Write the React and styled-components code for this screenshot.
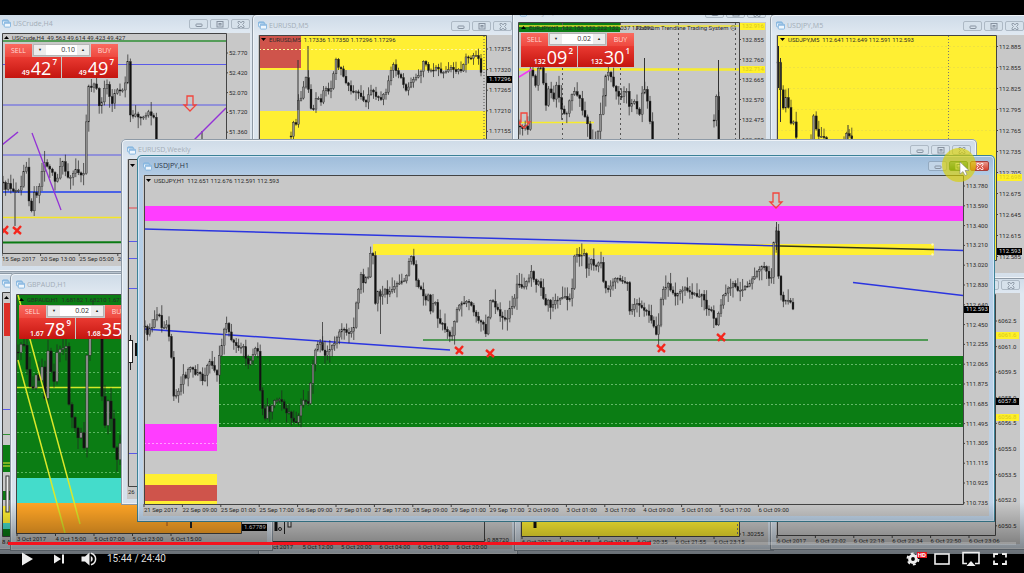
import styled, { createGlobalStyle, css } from 'styled-components';
import { useState } from 'react';

const LETTERBOX_TOP = 15;
const UP = '#8f8f8f';

const H1_PRICES = [
  '113.780', '113.590', '113.400', '113.210', '113.020', '112.830',
  '112.640', '112.450', '112.255', '112.065', '111.875', '111.685',
  '111.495', '111.305', '111.115', '110.925', '110.735',
];

const H1_TIMES = [
  '21 Sep 2017', '22 Sep 09:00', '25 Sep 01:00', '25 Sep 17:00',
  '26 Sep 09:00', '27 Sep 01:00', '27 Sep 17:00', '28 Sep 09:00',
  '29 Sep 01:00', '29 Sep 17:00', '2 Oct 09:00', '3 Oct 01:00',
  '3 Oct 17:00', '4 Oct 09:00', '5 Oct 01:00', '5 Oct 17:00', '6 Oct 09:00',
];

// [x, y] turning points, the candles are filled in between them
const H1_PATH = [
  [145, 326], [146, 342], [149, 328], [152, 327], [156, 314], [159, 314],
  [161, 325], [163, 329], [166, 324], [168, 326], [170, 345], [172, 363],
  [173, 378], [174, 400], [177, 393], [180, 390], [182, 377], [184, 372],
  [186, 379], [188, 370], [192, 368], [195, 375], [198, 371], [203, 381],
  [206, 371], [209, 361], [213, 365], [217, 376], [219, 356], [222, 344],
  [225, 325], [227, 322], [229, 333], [233, 343], [238, 347], [244, 347],
  [246, 359], [249, 366], [253, 354], [256, 348], [258, 351], [260, 388],
  [263, 412], [265, 418], [267, 404], [270, 413], [274, 402], [279, 400],
  [283, 401], [285, 414], [289, 411], [292, 421], [297, 421], [300, 412],
  [302, 397], [306, 403], [309, 402], [311, 380], [314, 356], [317, 345],
  [321, 342], [324, 356], [328, 350], [333, 346], [338, 336], [341, 328],
  [345, 331], [350, 334], [354, 326], [356, 305], [359, 288], [361, 275],
  [363, 283], [366, 278], [369, 275], [371, 247], [373, 257], [375, 305],
  [378, 292], [381, 298], [384, 289], [388, 294], [392, 288], [397, 284],
  [402, 280], [406, 282], [408, 264], [411, 257], [414, 264], [417, 286],
  [421, 290], [426, 301], [429, 294], [431, 317], [434, 295], [438, 320],
  [443, 325], [448, 333], [451, 340], [454, 326], [457, 310], [461, 304],
  [465, 302], [470, 303], [474, 313], [478, 320], [482, 324], [485, 326],
  [487, 343], [489, 302], [493, 302], [497, 308], [501, 317], [507, 319],
  [510, 307], [514, 304], [516, 284], [518, 282], [523, 287], [528, 281],
  [532, 269], [535, 289], [538, 281], [542, 290], [545, 306], [549, 300],
  [551, 311], [554, 300], [560, 300], [564, 294], [569, 301], [572, 290],
  [575, 252], [579, 256], [584, 252], [587, 272], [590, 259], [596, 267],
  [601, 261], [604, 286], [607, 292], [612, 283], [616, 279], [622, 281],
  [628, 284], [630, 315], [634, 304], [638, 303], [643, 309], [648, 313],
  [652, 320], [656, 334], [659, 322], [661, 300], [664, 287], [668, 284],
  [673, 293], [677, 296], [681, 291], [686, 288], [691, 293], [696, 295],
  [703, 296], [707, 309], [712, 311], [716, 327], [719, 312], [723, 297],
  [727, 290], [733, 284], [738, 290], [744, 288], [749, 285], [754, 276],
  [759, 270], [764, 266], [769, 278], [773, 275], [774, 236], [777, 229],
  [779, 287], [782, 301], [786, 302], [788, 299], [791, 303], [793, 309],
];

const CRUDE_PATH = [
  [3, 182], [5, 192], [8, 183], [12, 190], [16, 190], [20, 192], [24, 170],
  [27, 166], [29, 200], [31, 216], [34, 192], [38, 196], [41, 176],
  [44, 160], [48, 168], [52, 172], [56, 186], [60, 166], [63, 163],
  [67, 176], [71, 178], [76, 168], [81, 176], [84, 172], [86, 125],
  [88, 87], [92, 87], [96, 83], [98, 98], [100, 113], [104, 88], [108, 83],
  [111, 109], [114, 94], [118, 90], [122, 91], [125, 90], [126, 52],
  [128, 62], [130, 112], [131, 120], [135, 112], [139, 119], [144, 118],
  [149, 112], [154, 118], [156, 138], [158, 152],
];

const EURUSD_PATH = [
  [291, 136], [293, 123], [296, 124], [298, 100], [301, 97], [304, 84],
  [307, 76], [309, 92], [311, 108], [314, 109], [317, 92], [320, 106],
  [324, 88], [330, 91], [333, 80], [335, 56], [338, 68], [341, 70],
  [345, 80], [350, 90], [355, 92], [360, 94], [366, 103], [370, 88],
  [375, 95], [380, 100], [386, 92], [390, 73], [393, 64], [397, 72],
  [402, 80], [406, 91], [411, 82], [416, 77], [421, 72], [424, 61],
  [429, 72], [437, 67], [443, 74], [450, 67], [457, 71], [463, 69],
  [465, 56], [470, 60], [475, 54], [479, 58], [482, 79],
];

const EURJPY_PATH = [
  [520, 126], [523, 130], [526, 124], [529, 132], [530, 68], [533, 75],
  [536, 88], [539, 60], [543, 76], [545, 110], [549, 87], [554, 99],
  [557, 82], [560, 104], [566, 118], [570, 99], [575, 91], [579, 97],
  [583, 112], [587, 120], [590, 142], [597, 140], [601, 110], [604, 90],
  [607, 68], [611, 78], [616, 92], [620, 98], [626, 88], [629, 106],
  [634, 101], [640, 116], [643, 84], [646, 92], [649, 112], [653, 150],
];

const USDJPY_PATHS = [
  [[778, 62], [780, 80], [782, 115], [785, 97], [788, 96], [789, 122], [795, 123], [797, 145]],
  [[811, 140], [812, 115], [815, 118], [817, 136], [823, 135], [827, 142]],
  [[844, 142], [846, 134], [850, 136], [854, 140]],
];

const GBPAUD_PATH = [
  [18, 352], [21, 345], [25, 345], [28, 380], [32, 391], [37, 372],
  [40, 383], [43, 358], [45, 398], [48, 350], [51, 372], [55, 384],
  [57, 352], [62, 348], [66, 345], [68, 400], [72, 418], [74, 408],
  [76, 450], [80, 428], [84, 447], [86, 370], [89, 330], [93, 310],
  [100, 330], [102, 395], [104, 432], [108, 402], [113, 428], [115, 466],
  [118, 458], [121, 435],
];

const yAt = (path, x) => {
  const i = path.findIndex((point) => point[0] >= x);
  if (i <= 0) return path[0][1];
  const [x0, y0] = path[i - 1];
  const [x1, y1] = path[i];
  return y0 + ((y1 - y0) * (x - x0)) / (x1 - x0);
};

const makeCandles = (path, step, wick) => {
  const result = [];
  const last = path[path.length - 1][0];
  let open = path[0][1];
  let seed = 7;
  for (let x = path[0][0]; x <= last; x += step) {
    seed = (seed * 16807) % 2147483647;
    const a = (seed % 1000) / 1000;
    seed = (seed * 16807) % 2147483647;
    const b = (seed % 1000) / 1000;
    const close = yAt(path, x) + (a - 0.5) * 3;
    result.push({
      x,
      open,
      close,
      high: Math.min(open, close) - a * a * wick - 1,
      low: Math.max(open, close) + b * b * wick + 1,
    });
    open = close;
  }
  return result;
};

function Candles({ path, step = 2.4, wick = 11 }) {
  return (
    <g>
      {makeCandles(path, step, wick).map((c) => (
        <g key={c.x}>
          <line x1={c.x} x2={c.x} y1={c.high} y2={c.low} stroke='#222' strokeWidth='0.7' />
          <rect
            x={c.x - step * 0.38}
            width={step * 0.76}
            y={Math.min(c.open, c.close)}
            height={Math.max(1, Math.abs(c.close - c.open))}
            fill={c.close > c.open ? '#111' : UP}
            stroke='#222'
            strokeWidth='0.4'
          />
        </g>
      ))}
    </g>
  );
}

function Zone({ x, y, to, bottom, color }) {
  return <rect x={x} y={y} width={to - x} height={bottom - y} fill={color} />;
}

function Line({ from, to, color, width = 1, dash }) {
  return (
    <line
      x1={from[0]}
      y1={from[1]}
      x2={to[0]}
      y2={to[1]}
      stroke={color}
      strokeWidth={width}
      strokeDasharray={dash}
    />
  );
}

function Frame({ left, top, right, bottom }) {
  return (
    <path
      d={`M${left} ${bottom}V${top}H${right}V${bottom}Z`}
      fill='none'
      stroke='#444'
      strokeWidth='1'
    />
  );
}

function PriceAxis({ x, y, step, prices }) {
  return prices.map((price, i) => (
    <g key={price}>
      <path d={`M${x} ${y + i * step}h2`} stroke='#444' />
      <Label x={x + 3} y={y + i * step + 2}>
        {price}
      </Label>
    </g>
  ));
}

function TimeAxis({ x, y, step, times }) {
  return times.map((time, i) => (
    <g key={time}>
      <path d={`M${x + i * step} ${y - 8}v3`} stroke='#444' />
      <Label x={x + i * step} y={y}>
        {time}
      </Label>
    </g>
  ));
}

function PriceTag({ x, y, width = 25, color = '#000', text = '#ddd', children }) {
  return (
    <g>
      <rect x={x} y={y - 3} width={width} height='7' fill={color} />
      <Label x={x + 2} y={y + 2} $color={text}>
        {children}
      </Label>
    </g>
  );
}

function ChartTitle({ x, y, up, children }) {
  return (
    <g>
      <path d={up ? `M${x} ${y}h5l-2.5 -3z` : `M${x} ${y - 3}h5l-2.5 3z`} fill='#000' />
      <Label x={x + 8} y={y + 1}>
        {children}
      </Label>
    </g>
  );
}

function Cross({ x, y }) {
  return (
    <path
      d={`M${x - 4} ${y - 3}l8 7M${x + 4} ${y - 4}l-7 8`}
      stroke='#f5261c'
      strokeWidth='2.4'
      fill='none'
    />
  );
}

function DownArrow({ x, y }) {
  return (
    <path
      d={`M${x - 3} ${y}h6v9h3l-6 6l-6 -6h3z`}
      stroke='#f2453c'
      strokeWidth='1.3'
      fill='none'
    />
  );
}

function WindowIcon() {
  return (
    <svg width='9' height='9' viewBox='0 0 10 9' fill='#eef6fd' stroke='#7fb2de'>
      <rect x='0.5' y='0.5' width='6.5' height='5.5' rx='1' />
      <path d='M0.5 1.5h6.5' strokeWidth='1.4' />
      <rect x='2.5' y='3' width='7' height='5.5' rx='1' />
      <path d='M2.5 4h7' strokeWidth='1.4' />
    </svg>
  );
}

const GLYPHS = {
  Minimize: <rect x='2' y='4' width='6' height='2.5' rx='0.5' />,
  Maximize: (
    <>
      <rect x='2' y='1.5' width='6' height='5.5' />
      <rect x='4' y='3.5' width='2' height='1.5' />
    </>
  ),
  Close: (
    <path
      d='M2 1.5h2l1 1.5l1 -1.5h2v1.5l-1.5 1.5l1.5 1.5v1.5h-2l-1 -1.5l-1 1.5h-2v-1.5l1.5 -1.5l-1.5 -1.5z'
      strokeWidth='0.8'
    />
  ),
};

function ChartWindow({ title, x, y, width, height, bar = 21, active, overlay, children }) {
  const pad = 6;
  return (
    <WindowShell $x={x} $y={y} $width={width} $height={height} $active={active}>
      <TitleBar $height={bar}>
        <WindowIcon />
        <Title $active={active}>{title}</Title>
        {Object.keys(GLYPHS).map((name) => (
          <WindowButton key={name} aria-label={`${name} ${title}`} $kind={active && name}>
            <svg width='10' height='9' viewBox='0 0 10 9' fill='none' stroke='currentColor'>
              {GLYPHS[name]}
            </svg>
          </WindowButton>
        ))}
      </TitleBar>
      <Content>
        <Chart
          viewBox={`${x + pad} ${y + bar} ${width - pad * 2} ${height - bar - pad}`}
          preserveAspectRatio='xMinYMin slice'
        >
          {children}
        </Chart>
        {overlay}
      </Content>
    </WindowShell>
  );
}

function TradePanel({ lots, sell, buy }) {
  const [value, setValue] = useState(lots);
  const move = (delta) => setValue((prev) => (Number(prev) + delta).toFixed(2));

  return (
    <TradeBox>
      <TradeRow>
        <SideButton>SELL</SideButton>
        <Lots>
          <Step aria-label='Less' onClick={() => move(-0.01)}>▼</Step>
          <LotsInput
            aria-label='Lots'
            value={value}
            onChange={(e) => setValue(e.target.value)}
          />
          <Step aria-label='More' onClick={() => move(0.01)}>▲</Step>
        </Lots>
        <SideButton>BUY</SideButton>
      </TradeRow>
      <TradeRow>
        {[sell, buy].map(([base, big, point]) => (
          <PriceButton key={base + big}>
            <Base>{base}</Base>
            <Big>{big}</Big>
            <Point>{point}</Point>
          </PriceButton>
        ))}
      </TradeRow>
    </TradeBox>
  );
}

function CrudeWindow() {
  return (
    <ChartWindow
      title='USCrude,H4'
      x={-4}
      y={12}
      width={260}
      height={260}
      overlay={<TradePanel lots='0.10' sell={['49', '42', '7']} buy={['49', '49', '7']} />}
    >
      <Line from={[2, 105]} to={[226, 105]} color='#5a5ae8' />
      <Line from={[2, 64.5]} to={[226, 64.5]} color='#5a5ae8' />
      <Line from={[2, 155]} to={[226, 155]} color='#5a5ae8' />
      <Line from={[2, 192]} to={[226, 192]} color='#1f3ff0' width={1.5} />
      <Line from={[2, 217.5]} to={[226, 217.5]} color='#f5e626' width={1.5} />
      <Line from={[2, 242.5]} to={[226, 242]} color='#0a7a12' width={2} />
      <Line from={[2, 41]} to={[226, 41]} color='#2f8f35' width={1.5} />
      <Candles path={CRUDE_PATH} step={2.6} wick={12} />
      <Line from={[15, 190]} to={[15, 226]} color='#333' />
      <Line from={[202, 131]} to={[202, 142]} color='#333' />
      <Line from={[2, 145]} to={[18, 132]} color='#9332d6' width={1.5} />
      <Line from={[32, 133]} to={[61, 210]} color='#9332d6' width={1.3} />
      <Line from={[194, 140]} to={[226, 108]} color='#9332d6' width={1.5} />
      <Cross x={4} y={230} />
      <Cross x={17} y={230} />
      <DownArrow x={190} y={96} />
      <Frame left={2.5} top={33.5} right={226.5} bottom={253.5} />
      <ChartTitle x={4} y={39} up>
        USCrude,H4  49.563 49.614 49.423 49.427
      </ChartTitle>
      <PriceAxis
        x={226}
        y={53}
        step={19.8}
        prices={['52.770', '52.420', '52.070', '51.720', '51.360']}
      />
      <TimeAxis
        x={2}
        y={261}
        step={38.6}
        times={['15 Sep 2017', '20 Sep 13:00', '25 Sep 05:00', '27 Sep 21:00']}
      />
    </ChartWindow>
  );
}

function EurUsdWindow() {
  return (
    <ChartWindow title='EURUSD,M5' x={252} y={14} width={266} height={250}>
      <Zone x={259} y={35} to={486} bottom={70} color='#ffef33' />
      <Zone x={259} y={111} to={486} bottom={240} color='#ffef33' />
      <Zone x={259} y={35} to={301} bottom={68} color='#cf544b' />
      <Line from={[259, 49.5]} to={[486, 49.5]} color='#fff7a0' dash='2 2' />
      <Line from={[484, 36]} to={[484, 140]} color='#555' dash='1 2' />
      <Candles path={EURUSD_PATH} step={2.5} wick={8} />
      <Line from={[308, 46]} to={[308, 78]} color='#333' />
      <Line from={[298, 60]} to={[298, 110]} color='#333' />
      <Frame left={259.5} top={35.5} right={486.5} bottom={240.5} />
      <ChartTitle x={261} y={41}>
        EURUSD,M5  1.17336 1.17350 1.17296 1.17296
      </ChartTitle>
      <PriceAxis
        x={486}
        y={49}
        step={20.6}
        prices={['1.17375', '1.17320', '1.17265', '1.17210', '1.17155']}
      />
      <PriceTag x={487} y={79}>1.17296</PriceTag>
    </ChartWindow>
  );
}

function EurJpyWindow() {
  return (
    <ChartWindow
      title='EURJPY,H1'
      x={512}
      y={1}
      width={260}
      height={250}
      overlay={<TradePanel lots='0.02' sell={['132', '09', '2']} buy={['132', '30', '1']} />}
    >
      <Zone x={519} y={23} to={620} bottom={32} color='#0b7d14' />
      <Line from={[519, 26]} to={[739, 26]} color='#f2e930' width={1.5} />
      <Line from={[519, 69.5]} to={[739, 69.5]} color='#f7ec2c' width={2.4} />
      <Line from={[519, 122.5]} to={[594, 122.5]} color='#f7ec2c' width={1.6} />
      {[562.5, 620.5, 678.5, 735.5].map((x) => (
        <Line key={x} from={[x, 23]} to={[x, 145]} color='#555' dash='2 3' />
      ))}
      <Candles path={EURJPY_PATH} step={2.6} wick={13} />
      <Candles path={[[714, 120], [715, 118], [717, 88], [719, 150]]} step={2.4} />
      <Line from={[718.5, 60]} to={[718.5, 110]} color='#333' />
      <Line from={[644.5, 58]} to={[644.5, 90]} color='#333' />
      <Line from={[519, 77]} to={[532, 69]} color='#f23cf2' width={1.5} />
      <DownArrow x={524} y={113} />
      <Frame left={518.5} top={22.5} right={739.5} bottom={240.5} />
      <ChartTitle x={521} y={29} up>
        EURJPY,H1  132.180 132.222 132.037 132.092
      </ChartTitle>
      <Label x='736' y='30' textAnchor='end'>Platinum Trendline Trading System ☹</Label>
      <PriceAxis
        x={739}
        y={39.5}
        step={20}
        prices={['132.855', '132.760', '132.665', '132.570', '132.475', '132.380']}
      />
      <PriceTag x={740} y={26} color='#fff02a' text='#d8c81e'>132.916</PriceTag>
      <PriceTag x={740} y={69} color='#fff02a' text='#d8c81e'>132.714</PriceTag>
    </ChartWindow>
  );
}

function UsdJpyM5Window() {
  return (
    <ChartWindow title='USDJPY,M5' x={770} y={14} width={260} height={265}>
      <Zone x={777} y={35} to={996} bottom={261} color='#ffef33' />
      {[46.5, 67.5, 88.5, 109.5, 130.5].map((y) => (
        <Line key={y} from={[777, y]} to={[996, y]} color='#f0e240' dash='2 2' />
      ))}
      <Line from={[948.5, 36]} to={[948.5, 150]} color='#777' dash='1 2' />
      {USDJPY_PATHS.map((path) => (
        <Candles key={path[0][0]} path={path} step={2.6} />
      ))}
      <Line from={[778, 46]} to={[778, 88]} color='#222' width={2} />
      <Line from={[780.5, 58]} to={[780.5, 122]} color='#333' />
      <Line from={[848, 125]} to={[848, 140]} color='#333' />
      <Frame left={777.5} top={35.5} right={996.5} bottom={260.5} />
      <ChartTitle x={780} y={41}>
        USDJPY,M5  112.641 112.649 112.591 112.593
      </ChartTitle>
      <PriceAxis
        x={996}
        y={46.5}
        step={21}
        prices={[
          '112.885', '112.855', '112.825', '112.795', '112.765', '112.735',
          '112.705', '112.675', '112.645', '112.615', '112.585',
        ]}
      />
      <PriceTag x={997} y={177} color='#fff02a' text='#d8c81e'>112.698</PriceTag>
      <PriceTag x={997} y={251}>112.593</PriceTag>
    </ChartWindow>
  );
}

function HiddenWindow() {
  return (
    <ChartWindow title='' x={-4} y={273} width={260} height={277} bar={19}>
      <Zone x={4} y={303} to={20} bottom={336} color='#dc2f28' />
      <Line from={[2, 409.5]} to={[20, 409.5]} color='#5a5ae8' />
      <Line from={[2, 434.5]} to={[20, 434.5]} color='#2f8f35' />
      <Zone x={2} y={445} to={20} bottom={472} color='#0b7d14' />
      <Line from={[2, 463]} to={[20, 463]} color='#f2e930' />
      <Line from={[2, 466]} to={[20, 466]} color='#f2e930' />
      <Zone x={2} y={491} to={20} bottom={500} color='#0b7d14' />
      <Zone x={2} y={506} to={20} bottom={523} color='#ffef33' />
      <Zone x={2} y={523} to={20} bottom={529} color='#44dccb' />
      <Zone x={2} y={529} to={20} bottom={536} color='#0b7d14' />
      <rect x='6' y='476' width='3' height='36' fill='#eee' stroke='#333' />
      <path d='M4 299h5l-2.5 -3z' />
      <Frame left={2.5} top={292.5} right={226.5} bottom={536.5} />
      <Label x='2' y='544'>8 A</Label>
    </ChartWindow>
  );
}

function GbpAudWindow() {
  return (
    <ChartWindow
      title='GBPAUD,H1'
      x={10}
      y={273}
      width={263}
      height={278}
      overlay={<TradePanel lots='0.02' sell={['1.67', '78', '9']} buy={['1.68', '35', '5']} />}
    >
      <Zone x={17} y={294} to={241} bottom={478} color='#0b7d14' />
      <Zone x={17} y={478} to={241} bottom={503} color='#44dccb' />
      <Zone x={17} y={503} to={241} bottom={533} color='#ffa526' />
      {[352, 372, 392, 412, 432, 452, 472].map((y) => (
        <Line key={y} from={[17, y + 0.5]} to={[241, y + 0.5]} color='#5bb562' dash='2 2' />
      ))}
      <Line from={[17, 387.5]} to={[241, 387.5]} color='#d4e829' width={1.4} />
      <Candles path={GBPAUD_PATH} step={3} wick={15} />
      <Line from={[18, 295]} to={[80, 524]} color='#dbe82a' width={1.5} />
      <Line from={[18, 360]} to={[65, 533]} color='#dbe82a' width={1.5} />
      <Line from={[191, 518]} to={[191, 528]} color='#222' width={2} />
      <Line from={[167, 518]} to={[167, 526]} color='#a0521e' />
      <Frame left={16.5} top={294.5} right={241.5} bottom={533.5} />
      <ChartTitle x={19} y={301} up>
        GBPAUD,H1  1.68182 1.68210 1.67753 1.67789
      </ChartTitle>
      <PriceTag x={242} y={527}>1.67789</PriceTag>
      <TimeAxis
        x={17}
        y={541}
        step={38.5}
        times={['3 Oct 2017', '4 Oct 15:00', '5 Oct 07:00', '5 Oct 23:00', '6 Oct 15:00']}
      />
    </ChartWindow>
  );
}

function BottomRow() {
  return (
    <>
      <ChartWindow title='EURGBP,H1' x={258} y={275} width={260} height={280}>
        <path d='M276 516v15' stroke='#111' strokeWidth='3' />
        <circle cx='280' cy='529' r='1.5' fill='none' stroke='#222' />
        <path d='M284.5 522v12' stroke='#222' />
        <rect x='288' y='518' width='3' height='9' fill='#ddd' stroke='#222' />
        <Frame left={264.5} top={296.5} right={484.5} bottom={541.5} />
        <PriceAxis x={484} y={540} step={20} prices={['0.88720']} />
        <TimeAxis
          x={264}
          y={549}
          step={38.5}
          times={['5 Oct 2017', '5 Oct 12:00', '5 Oct 20:00', '6 Oct 04:00', '6 Oct 12:00', '6 Oct 20:00']}
        />
      </ChartWindow>
      <ChartWindow title='GBPUSD,M5' x={514} y={275} width={260} height={276}>
        <Zone x={521} y={296} to={740} bottom={536} color='#ffef33' />
        <Line from={[535, 520]} to={[535, 528]} color='#111' width={3} />
        <Line from={[737.5, 500]} to={[737.5, 536]} color='#777' dash='2 2' />
        <Frame left={521.5} top={296.5} right={739.5} bottom={536.5} />
        <PriceAxis x={739} y={534} step={20} prices={['1.30255']} />
        <TimeAxis
          x={522}
          y={544}
          step={38.4}
          times={['6 Oct 2017', '6 Oct 17:55', '6 Oct 19:15', '6 Oct 20:35', '6 Oct 21:55', '6 Oct 23:15']}
        />
      </ChartWindow>
      <ChartWindow title='DAX,M1' x={770} y={274} width={256} height={276} bar={19}>
        <Frame left={777.5} top={294.5} right={995.5} bottom={535.5} />
        <PriceAxis
          x={995}
          y={321}
          step={25.6}
          prices={[
            '6062.5', '6061.0', '6059.5', '6058.0', '6056.5', '6055.0',
            '6053.5', '6052.0', '6050.5',
          ]}
        />
        <PriceTag x={996} y={335} width={23} color='#fff02a' text='#d8c81e'>6061.6</PriceTag>
        <PriceTag x={996} y={417} width={23} color='#fff02a' text='#d8c81e'>6056.8</PriceTag>
        <PriceTag x={996} y={401} width={23}>6057.8</PriceTag>
        <TimeAxis
          x={777}
          y={543}
          step={38.4}
          times={['6 Oct 2017', '6 Oct 22:02', '6 Oct 22:18', '6 Oct 22:34', '6 Oct 22:50', '6 Oct 23:06']}
        />
      </ChartWindow>
    </>
  );
}

function WeeklyWindow() {
  return (
    <ChartWindow title='EURUSD,Weekly' x={121} y={139} width={856} height={366} bar={20}>
      <Line from={[129, 208]} to={[960, 208]} color='#e0484e' />
      {[241.5, 258.5, 288.5, 453.5].map((y) => (
        <Line key={y} from={[129, y]} to={[960, y]} color='#5a5ae8' />
      ))}
      <Line from={[130.5, 335]} to={[130.5, 370]} color='#222' />
      <rect x='128.5' y='340.5' width='4' height='22' fill='#fff' stroke='#222' />
      <Zone x={135} y={343} to={140} bottom={356} color='#111' />
      <path d='M130 164h5l-2.5 3z' />
      <Frame left={128.5} top={159.5} right={960.5} bottom={486.5} />
      <Label x='128' y='494'>26</Label>
    </ChartWindow>
  );
}

function UsdJpyH1Window() {
  return (
    <ChartWindow title='USDJPY,H1' x={137} y={155} width={858} height={367} bar={20} active>
      <Zone x={144} y={206} to={963} bottom={221} color='#ff3dff' />
      <Zone x={373} y={244} to={934} bottom={255} color='#ffef33' />
      <Zone x={219} y={356} to={963} bottom={427} color='#0b7d14' />
      <Zone x={144} y={424} to={217} bottom={451} color='#ff3dff' />
      <Zone x={144} y={474} to={217} bottom={504} color='#ffef33' />
      <Zone x={144} y={485} to={217} bottom={501} color='#cf544b' />
      {[364.5, 384.5, 404.5, 423.5].map((y) => (
        <Line key={y} from={[219, y]} to={[963, y]} color='#63b868' dash='2 2' />
      ))}
      <Line from={[144, 443.5]} to={[217, 443.5]} color='#ff9dff' dash='2 2' />
      <Line from={[423, 340]} to={[928, 340]} color='#2a8b31' width={1.5} />
      <Line from={[144, 229]} to={[780, 246]} color='#2b35e0' width={1.4} />
      <Line from={[780, 246]} to={[934, 249.5]} color='#33361c' width={1.3} />
      <Line from={[934, 249.5]} to={[963, 250.5]} color='#2b35e0' width={1.4} />
      <Line from={[144, 329]} to={[450, 350]} color='#2b35e0' width={1.5} />
      <Line from={[853, 282.5]} to={[963, 295.5]} color='#2b35e0' width={1.5} />
      <Candles path={H1_PATH} />
      <Line from={[380.5, 290]} to={[380.5, 334]} color='#333' width={0.8} />
      <Line from={[776.5, 222]} to={[776.5, 250]} color='#222' width={0.8} />
      <Line from={[322.5, 322]} to={[322.5, 345]} color='#333' width={0.8} />
      <circle cx='932.5' cy='244.5' r='1.2' fill='#fff9b0' />
      <circle cx='932.5' cy='254.5' r='1.2' fill='#fff9b0' />
      <Cross x={459} y={350} />
      <Cross x={490} y={353} />
      <Cross x={661} y={348} />
      <Cross x={721} y={337} />
      <DownArrow x={776} y={193} />
      <Frame left={144.5} top={175.5} right={963.5} bottom={504.5} />
      <ChartTitle x={146} y={182}>
        USDJPY,H1  112.651 112.676 112.591 112.593
      </ChartTitle>
      <PriceAxis x={963} y={186} step={19.8} prices={H1_PRICES} />
      <PriceTag x={964} y={309}>112.593</PriceTag>
      <TimeAxis x={144} y={512} step={38.4} times={H1_TIMES} />
    </ChartWindow>
  );
}

function PlayerControls() {
  const [time, setTime] = useState(944);
  const clock = `${Math.floor(time / 60)}:${String(time % 60).padStart(2, '0')}`;

  return (
    <Controls>
      <Seek
        type='range'
        aria-label='Seek'
        min='0'
        max='1480'
        value={time}
        onChange={(e) => setTime(Number(e.target.value))}
        style={{ '--played': `${(time / 1480) * 100}%` }}
      />
      <ControlRow>
        <IconButton aria-label='Play' $wide>
          <svg width='12' height='14' viewBox='0 0 12 14'>
            <path d='M1 0.5l11 6.5l-11 6.5z' />
          </svg>
        </IconButton>
        <IconButton aria-label='Next' $wide>
          <svg width='12' height='14' viewBox='0 0 12 14'>
            <path d='M2 2.5l7 4.5l-7 4.5zM10 2.5h2v9h-2z' />
          </svg>
        </IconButton>
        <IconButton aria-label='Mute' $wide>
          <svg width='16' height='14' viewBox='0 0 16 14'>
            <path d='M0.5 4.5h3.5l4.5 -4v13l-4.5 -4h-3.5z' />
            <path d='M9.8 4v6q2 -1 2 -3t-2 -3z' />
            <path
              d='M10 1.2q4.6 1.4 4.6 5.8t-4.6 5.8'
              fill='none'
              stroke='currentColor'
              strokeWidth='1.5'
            />
          </svg>
        </IconButton>
        <Time>{clock} / 24:40</Time>
        <IconButton aria-label='Settings'>
          <svg width='14' height='14' viewBox='0 0 14 14'>
            <circle cx='7' cy='7' r='3.4' fill='none' stroke='currentColor' strokeWidth='3' />
            <circle
              cx='7'
              cy='7'
              r='5.5'
              fill='none'
              stroke='currentColor'
              strokeWidth='2'
              strokeDasharray='2.8 2.96'
            />
          </svg>
          <Badge>HD</Badge>
        </IconButton>
        <IconButton aria-label='Theater mode'>
          <svg width='16' height='12' viewBox='0 0 16 12'>
            <rect x='1' y='1' width='14' height='10' fill='none' stroke='currentColor' strokeWidth='1.6' />
          </svg>
        </IconButton>
        <IconButton aria-label='AirPlay'>
          <svg width='18' height='16' viewBox='0 0 18 16'>
            <path d='M5 12.5h-4v-11h16v11h-4' fill='none' stroke='currentColor' strokeWidth='1.6' />
            <path d='M9 10l4.5 5h-9z' />
          </svg>
        </IconButton>
        <IconButton aria-label='Full screen'>
          <svg width='14' height='12' viewBox='0 0 14 12'>
            <path
              d='M1 4.5v-3.5h4M9 1h4v3.5M13 7.5v3.5h-4M5 11h-4v-3.5'
              fill='none'
              stroke='currentColor'
              strokeWidth='1.8'
            />
          </svg>
        </IconButton>
      </ControlRow>
    </Controls>
  );
}

const GlobalStyle = createGlobalStyle`
  * {
    box-sizing: border-box;
  }

  body {
    margin: 0;
    background: #000;
    font-family: 'Open Sans', 'Noto Sans', sans-serif;
  }

  button, input {
    margin: 0;
    padding: 0;
    border: 0;
    font: inherit;
  }
`;

const Player = styled.main`
  position: relative;
  display: flex;
  flex-direction: column;
  min-height: 100vh;
`;

const Desktop = styled.div`
  position: relative;
  flex: 1;
  overflow: hidden;
  margin: ${LETTERBOX_TOP}px 0 19px;
  background: #b9c4cf;
`;

const WindowShell = styled.section`
  position: absolute;
  left: ${({ $x }) => $x}px;
  top: ${({ $y }) => $y - LETTERBOX_TOP}px;
  display: flex;
  flex-direction: column;
  width: ${({ $width }) => $width}px;
  height: ${({ $height }) => $height}px;
  padding: 0 6px 6px;
  border-radius: 5px 5px 0 0;
  background: linear-gradient(#cddae7, #dfe8f1 20px, #d5e0eb);
  box-shadow: inset 0 0 0 1px #8e9aa6, inset 0 0 0 2px #eef3f8;

  ${({ $active }) =>
    $active &&
    css`
      background: linear-gradient(#9dbbd9, #b3cce5 20px, #bfd4e9);
      box-shadow: inset 0 0 0 1px #3c8297, inset 0 0 0 2px #d5e6f5;
    `}
`;

const TitleBar = styled.header`
  display: flex;
  flex: none;
  align-items: center;
  gap: 2px;
  height: ${({ $height }) => $height}px;
  padding-top: 2px;
`;

const Title = styled.h2`
  flex: 1;
  margin: 0;
  font-size: 7px;
  font-weight: 400;
  line-height: 10px;
  color: ${({ $active }) => ($active ? '#26323f' : '#a3adb7')};
`;

const WindowButton = styled.button`
  display: grid;
  place-items: center;
  width: 19px;
  height: 10px;
  border: 1px solid #adb9c5;
  border-radius: 2px;
  background: #d6e1eb;
  color: #8792a0;

  ${({ $kind }) =>
    $kind === 'Minimize' &&
    css`
      border-color: #93a9bf;
      background: #c3d5e7;
    `}
  ${({ $kind }) =>
    $kind === 'Maximize' &&
    css`
      border-color: #2d7d52;
      background: linear-gradient(#5aa98a, #0f7a2c);
      color: #d9efe2;
    `}
  ${({ $kind }) =>
    $kind === 'Close' &&
    css`
      border-color: #a5403c;
      background: linear-gradient(#e8968a, #d4402f);
      color: #fff;
    `}
`;

const Content = styled.div`
  position: relative;
  flex: 1;
  min-height: 0;
  background: #c8c8c8;
`;

const Chart = styled.svg`
  display: block;
  width: 100%;
  height: 100%;
`;

const Label = styled.text`
  font-family: Roboto, 'Open Sans', sans-serif;
  font-size: 6px;
  white-space: pre;
  fill: ${({ $color }) => $color || '#2a2a2a'};
`;

const TradeBox = styled.div`
  position: absolute;
  left: 3px;
  top: 11px;
  width: 113px;
  background: #c8c8c8;
`;

const TradeRow = styled.div`
  display: flex;
  gap: 1px;
`;

const SideButton = styled.button`
  width: 27px;
  height: 13px;
  background: linear-gradient(#fa6a60, #ee4a40);
  color: #ffd9d5;
  font-size: 7px;
  line-height: 13px;
`;

const Lots = styled.div`
  display: flex;
  flex: 1;
  height: 12px;
  border: 1px solid #b5b5b5;
  background: #fff;
`;

const Step = styled.button`
  width: 12px;
  background: #ececec;
  color: #222;
  font-size: 4px;
  line-height: 10px;
`;

const LotsInput = styled.input`
  flex: 1;
  width: 0;
  min-width: 0;
  padding-right: 2px;
  background: #fff;
  color: #333;
  font-size: 7px;
  line-height: 10px;
  text-align: right;
`;

const PriceButton = styled.button`
  display: flex;
  flex: 1;
  align-items: flex-end;
  justify-content: flex-end;
  gap: 1px;
  height: 21px;
  padding-right: 4px;
  background: linear-gradient(#ea3a32, #c4150f);
  color: #fff;
`;

const Base = styled.span`
  padding-bottom: 1px;
  font-size: 7px;
  font-weight: 600;
  line-height: 9px;
`;

const Big = styled.span`
  font-size: 18px;
  line-height: 20px;
`;

const Point = styled.span`
  align-self: flex-start;
  font-size: 8px;
  font-weight: 600;
  line-height: 10px;
`;

const Pointer = styled.svg`
  position: absolute;
  left: 942px;
  top: 133px;
  width: 34px;
  height: 34px;
  pointer-events: none;
`;

const Controls = styled.footer`
  position: absolute;
  right: 0;
  bottom: 0;
  left: 0;
  padding: 40px 8px 0;
  background: linear-gradient(transparent, rgba(0, 0, 0, 0.45) 54px);
`;

const Seek = styled.input`
  display: block;
  width: 100%;
  height: 3px;
  appearance: none;
  background: linear-gradient(
    to right,
    #f5121d var(--played),
    rgba(255, 255, 255, 0.2) var(--played)
  );

  &::-webkit-slider-thumb {
    appearance: none;
    width: 0;
    height: 0;
  }
`;

const ControlRow = styled.div`
  display: flex;
  align-items: center;
  height: 28px;
  padding: 0 2px 0 3px;
`;

const IconButton = styled.button`
  position: relative;
  display: grid;
  place-items: center;
  width: ${({ $wide }) => ($wide ? 31 : 29)}px;
  height: 20px;
  background: none;
  color: #eee;

  svg {
    fill: currentColor;
  }
`;

const Time = styled.span`
  flex: 1;
  padding-left: 3px;
  color: #ddd;
  font-family: Roboto, sans-serif;
  font-size: 10px;
  line-height: 16px;
`;

const Badge = styled.span`
  position: absolute;
  top: 3px;
  right: 0;
  padding: 0 1px;
  background: #e8121c;
  color: #fff;
  font-family: Roboto, sans-serif;
  font-size: 6px;
  font-weight: 700;
  line-height: 6px;
`;

export default function App() {
  return (
    <>
      <GlobalStyle />
      <Player>
        <Desktop>
          <CrudeWindow />
          <EurUsdWindow />
          <EurJpyWindow />
          <HiddenWindow />
          <BottomRow />
          <UsdJpyM5Window />
          <GbpAudWindow />
          <WeeklyWindow />
          <UsdJpyH1Window />
          <Pointer viewBox='0 0 34 34'>
            <circle cx='17' cy='17' r='17' fill='#d8cf00' fillOpacity='0.65' />
            <path
              d='M18 14v12l3 -2.5l2 4l2 -1l-2 -4h4z'
              fill='#fff'
              stroke='#777'
              strokeWidth='0.5'
            />
          </Pointer>
        </Desktop>
        <PlayerControls />
      </Player>
    </>
  );
}
